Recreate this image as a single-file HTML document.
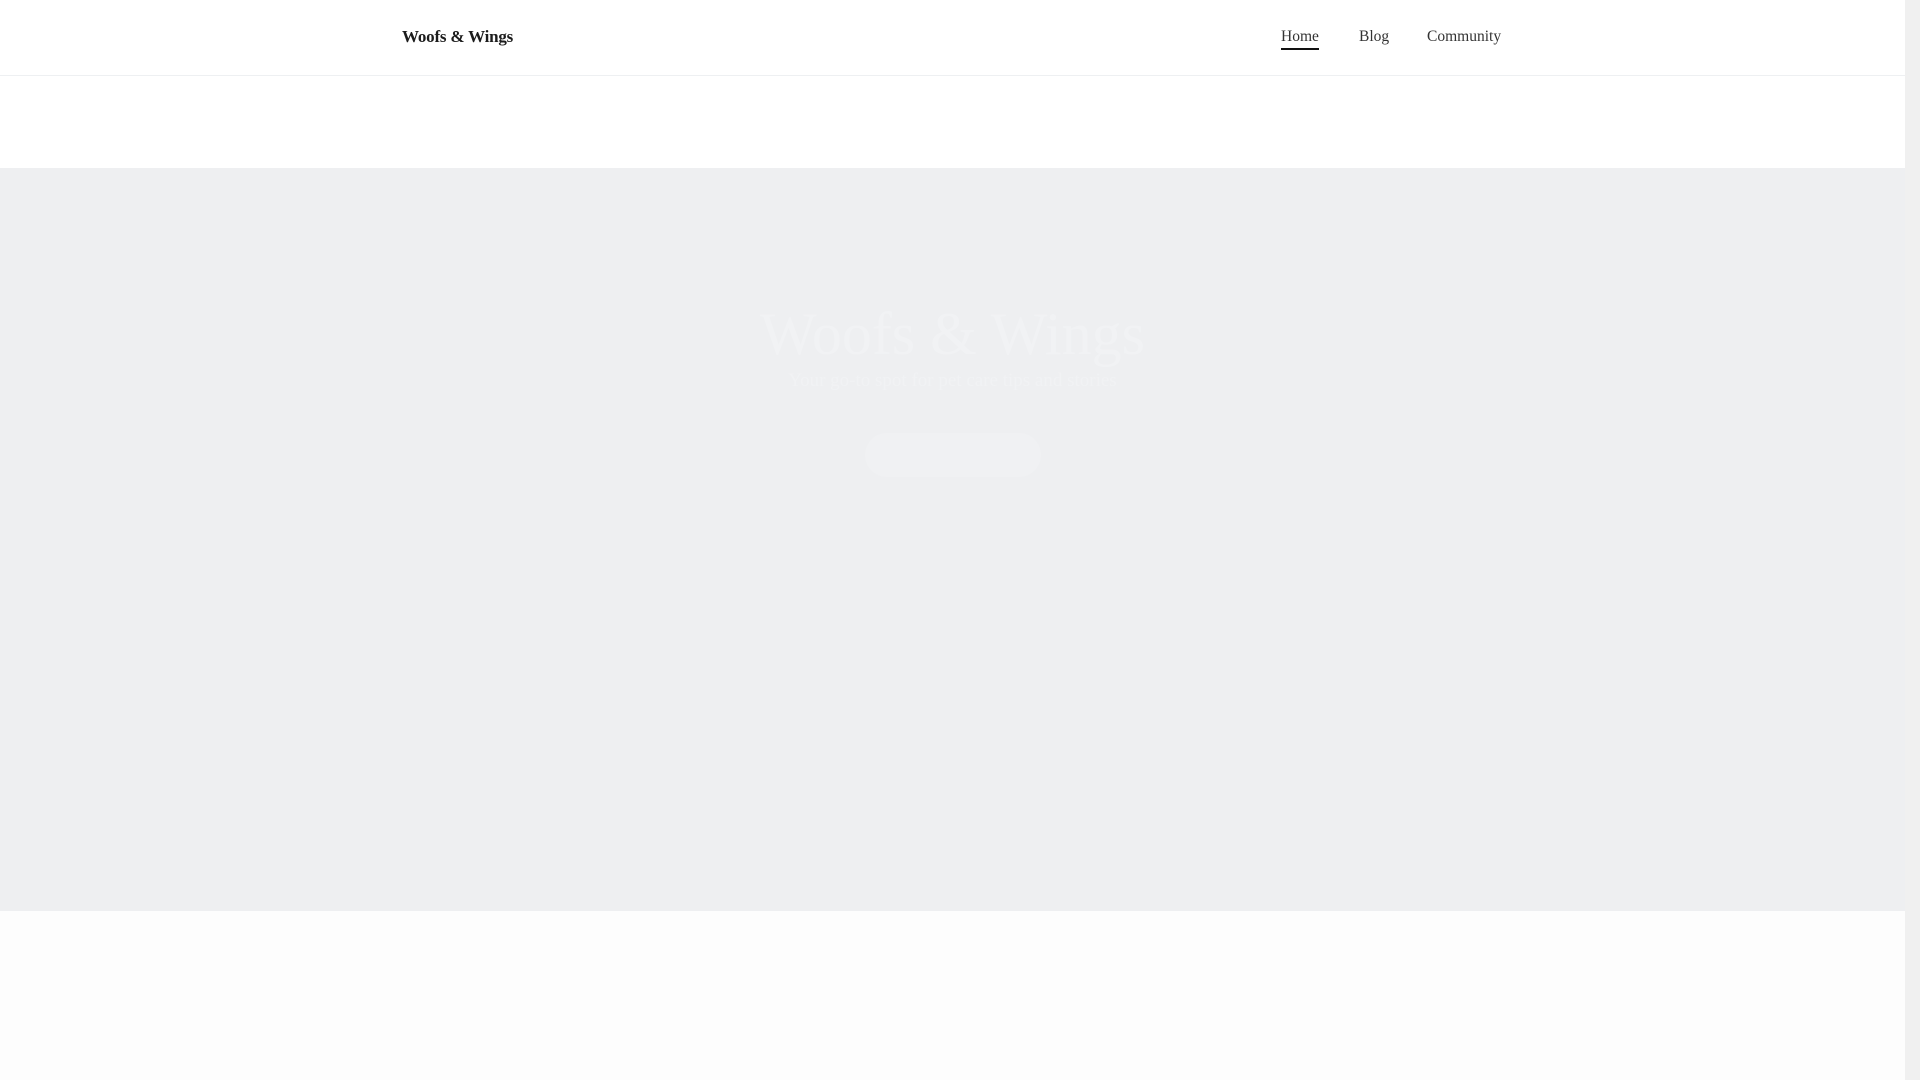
<!DOCTYPE html>
<html><head><meta charset="utf-8"><style>
html,body{margin:0;padding:0;width:1920px;height:1080px;overflow:hidden;background:#fdfdfd;font-family:"Liberation Serif",serif}
.hdr{position:absolute;left:0;top:0;width:1905px;height:75px;background:#fff;border-bottom:1px solid #eef0f2;box-shadow:0 1px 2px rgba(0,0,0,.03)}
.logo{position:absolute;left:402px;top:27px;font-size:17px;font-weight:bold;color:#1c1c1c;letter-spacing:-0.2px}
.nav a{position:absolute;top:28px;font-size:15.5px;color:#333;text-decoration:none}
.u{position:absolute;left:1281px;top:48px;width:38px;height:2px;background:#111}
.wband{position:absolute;left:0;top:76px;width:1905px;height:92px;background:#fff}
.hero{position:absolute;left:0;top:168px;width:1905px;height:743px;background:#eeeff1}
.t{position:absolute;left:0;width:1905px;text-align:center;top:300px;font-size:60px;color:#f1f2f4}
.s{position:absolute;left:0;width:1905px;text-align:center;top:370px;font-size:19px;color:#f1f2f4}
.b{position:absolute;left:865px;top:433px;width:176px;height:44px;border-radius:22px;background:#f0f1f3}
.sb{position:absolute;left:1905px;top:0;width:15px;height:1080px;background:#f0f0f0}
.th{position:absolute;left:1907px;top:7px;width:11px;height:185px;background:#c1c1c1}
</style></head><body>
<div class="hdr"><div class="logo">Woofs &amp; Wings</div>
<div class="nav"><a style="left:1281px">Home</a><a style="left:1359px">Blog</a><a style="left:1427px">Community</a></div>
<div class="u"></div></div>
<div class="wband"></div>
<div class="hero"></div>
<div class="t">Woofs &amp; Wings</div>
<div class="s">Your go-to spot for pet care tips and stories</div>
<div class="b"></div>
<div class="sb"><div class="th"></div></div>
</body></html>
